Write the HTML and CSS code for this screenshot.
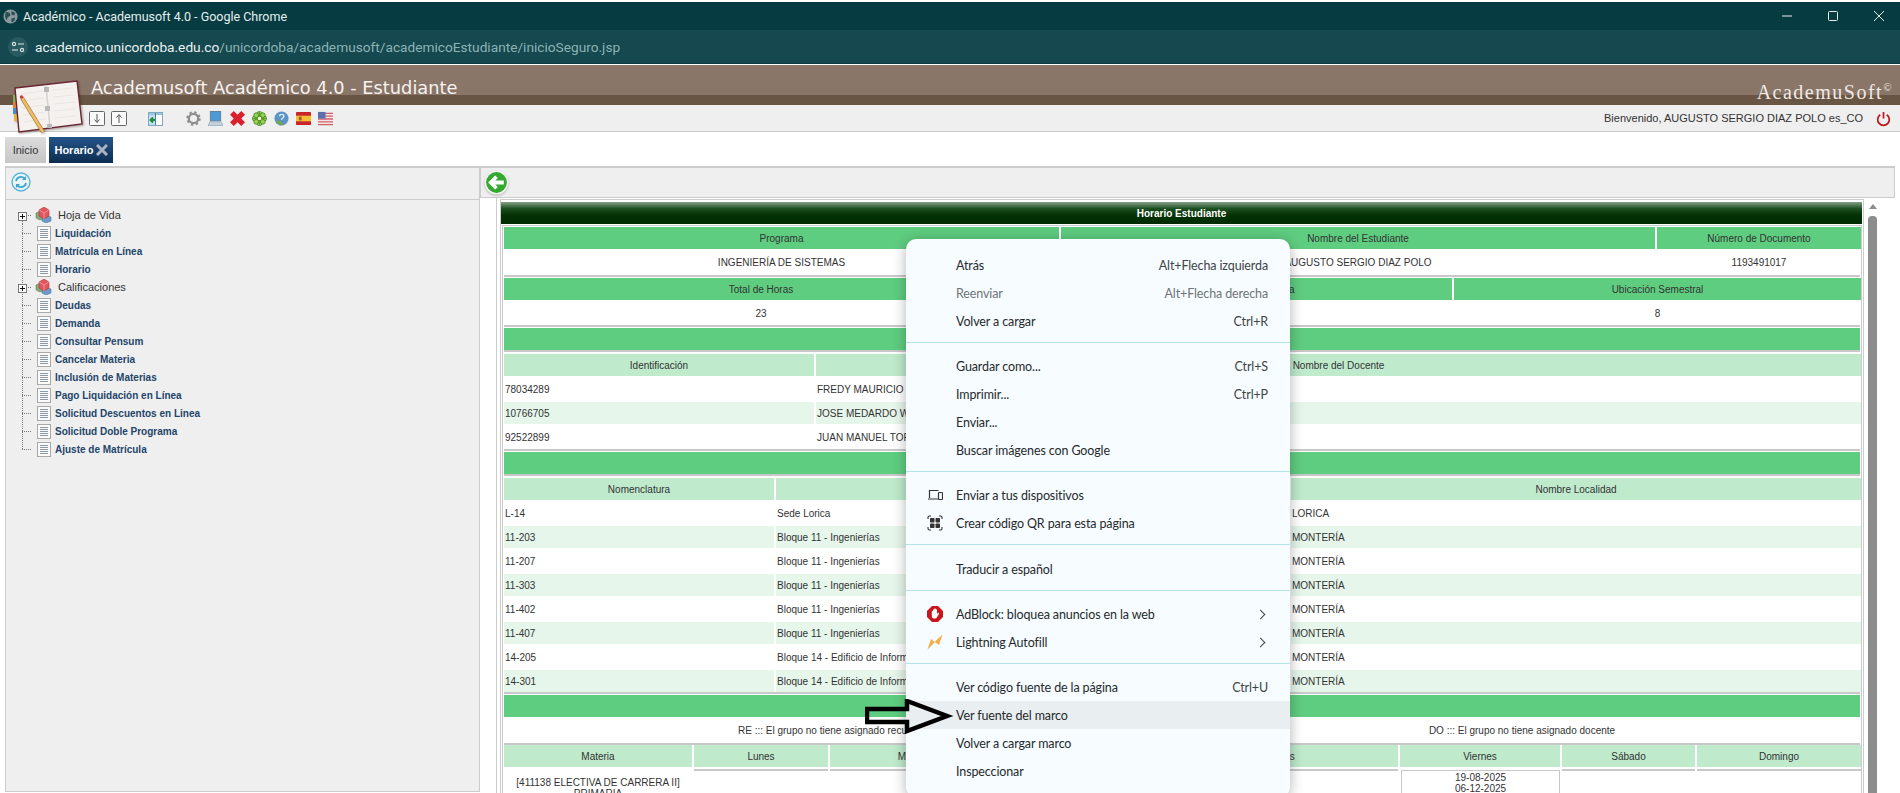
FILE: index.html
```html
<!DOCTYPE html>
<html lang="es">
<head>
    <meta charset="UTF-8">
    <title>Académico - Academusoft 4.0 - Google Chrome</title>
    <link rel="stylesheet" href="styles.css">
</head>
<body>
    <svg class="defs" width="0" height="0">
        <symbol id="doc" viewBox="0 0 14 15">
            <rect x=".5" y=".5" width="13" height="14" fill="#fafafa" stroke="#a9a9a9"/>
            <path d="M3 3.5h8M3 5.5h8M3 7.5h8M3 9.5h8M3 11.5h8" stroke="#8b98a5"/>
        </symbol>
        <symbol id="cubes" viewBox="0 0 17 16">
            <path d="M1 6l4-2 4 2v5l-4 2-4-2z" fill="#7fae7a" stroke="#5c8a58" stroke-width=".6"/>
            <path d="M7 10l4-2 5 2v4l-5 2-4-2z" fill="#6d9ac9" stroke="#4c78a6" stroke-width=".6"/>
            <path d="M4 3l5-3 5 3v6l-5 3-5-3z" fill="#e0565c" stroke="#b23a40" stroke-width=".6"/>
            <path d="M4 3l5 3 5-3M9 6v6" fill="none" stroke="#f2a9ab" stroke-width=".7"/>
        </symbol>
        <symbol id="plus" viewBox="0 0 9 9">
            <rect x=".5" y=".5" width="8" height="8" fill="#fff" stroke="#777"/>
            <path d="M2 4.5h5M4.5 2v5" stroke="#111"/>
        </symbol>
    </svg>

    <div class="win-title">
        <svg class="globe" viewBox="0 0 16 16">
            <circle cx="8" cy="8" r="7.5" fill="#8b9a9d"/>
            <path d="M3 3l4 1 1 3-3 2-1 3-2-4zM9 2l4 2-1 3-3-1zM9 10l4-1-1 4-3 1z" fill="#2c4f55"/>
        </svg>
        <span>Académico - Academusoft 4.0 - Google Chrome</span>
        <div class="win-btns">
            <svg viewBox="0 0 12 12"><path d="M1 6h10" stroke="#e8eeee"/></svg>
            <svg viewBox="0 0 12 12"><rect x="1.5" y="1.5" width="9" height="9" rx="1" fill="none" stroke="#e8eeee"/></svg>
            <svg viewBox="0 0 12 12"><path d="M1 1l10 10M11 1L1 11" stroke="#e8eeee"/></svg>
        </div>
    </div>
    <div class="win-addr">
        <span class="tune">
            <svg viewBox="0 0 14 12">
                <circle cx="3" cy="3" r="1.6" fill="none" stroke="#dfeaeb" stroke-width="1.1"/>
                <path d="M7 3h6M1 9h6" stroke="#dfeaeb" stroke-width="1.1"/>
                <circle cx="11" cy="9" r="1.6" fill="none" stroke="#dfeaeb" stroke-width="1.1"/>
            </svg>
        </span>
        <span class="host">academico.unicordoba.edu.co</span><span class="path">/unicordoba/academusoft/academicoEstudiante/inicioSeguro.jsp</span>
    </div>

    <header class="app-head">
        <h1>Academusoft Académico 4.0 - Estudiante</h1>
        <div class="brand">AcademuSoft<sup>©</sup></div>
    </header>
    <svg class="logo" viewBox="0 0 70 55">
        <rect x="0" y="16" width="4" height="7" fill="#7cb257"/>
        <rect x="0" y="23" width="4" height="6" fill="#e0813a"/>
        <rect x="0" y="29" width="4" height="6" fill="#4c8cc8"/>
        <rect x="1" y="35" width="4" height="7" fill="#e2b53f"/>
        <path d="M2 9L64 2l5 43-63 8z" fill="#f4f1ee" stroke="#6a2733" stroke-width="1.4"/>
        <path d="M33 6l4 43" stroke="#d5d2cf" stroke-width="1.5"/>
        <path d="M8 15l22-3M9 22l22-3M9 29l22-3M10 36l22-3M11 43l22-3M39 11l21-2M40 18l21-2M41 25l21-2M41 32l21-2M42 39l21-2" stroke="#e3e0de" stroke-width=".7"/>
        <path d="M31 8h5v5h-5zM32 27h5v5h-5zM34 45h5v4h-5z" fill="#b9b9b9"/>
        <path d="M9 19l21 34" stroke="#a9772f" stroke-width="4"/>
        <path d="M9 19l21 34" stroke="#eebd6a" stroke-width="2.6"/>
        <circle cx="8.5" cy="18" r="1.8" fill="#c8404a"/>
    </svg>

    <div class="toolbar">
        <svg class="tb-box" viewBox="0 0 16 15">
            <rect x=".5" y=".5" width="15" height="14" rx="1" fill="#fafafa" stroke="#666"/>
            <path d="M8 3v8M5.500 8.500L8 11.500l2.500-3" fill="none" stroke="#555"/>
        </svg>
        <svg class="tb-box" viewBox="0 0 16 15">
            <rect x=".5" y=".5" width="15" height="14" rx="1" fill="#fafafa" stroke="#666"/>
            <path d="M8 12V4M5.500 6.500L8 3.500l2.500 3" fill="none" stroke="#555"/>
        </svg>
        <svg class="tb-panel" viewBox="0 0 15 14">
            <rect x=".5" y=".5" width="14" height="13" fill="#fff" stroke="#7fa8c4"/>
            <rect x="1" y="1" width="6" height="12" fill="#bfe0ee"/>
            <rect x="1" y="1" width="13" height="2" fill="#9cc4dc"/>
            <path d="M7.500 8H3M5 5.500L2.500 8 5 10.500" fill="none" stroke="#1e8a3a" stroke-width="1.800"/>
            <path d="M7.500 1v12" stroke="#4a7f9c"/>
        </svg>
        <div class="tb-set">
            <svg viewBox="0 0 16 16">
                <circle cx="8" cy="8" r="5" fill="none" stroke="#8d8d8d" stroke-width="2.400"/>
                <circle cx="8" cy="8" r="6.700" fill="none" stroke="#8d8d8d" stroke-width="2" stroke-dasharray="2.500 2.760"/>
            </svg>
            <svg viewBox="0 0 16 16">
                <rect x="2.500" y=".5" width="11" height="10" fill="#4d9ad6" stroke="#5f7f99"/>
                <path d="M2 11.500h12l2 4H0z" fill="#c5d3de" stroke="#7d94a8" stroke-width=".6"/>
            </svg>
            <svg viewBox="0 0 16 16"><path d="M0 4l4-4 4 4 4-4 4 4-4 4 4 4-4 4-4-4-4 4-4-4 4-4z" fill="#d9202c"/></svg>
            <svg viewBox="0 0 16 16">
                <g fill="#9ad04f" stroke="#3f7f24" stroke-width=".8">
                    <circle cx="8" cy="3.400" r="3"/><circle cx="3.400" cy="8" r="3"/>
                    <circle cx="12.600" cy="8" r="3"/><circle cx="8" cy="12.600" r="3"/>
                    <circle cx="4.500" cy="4.500" r="2.600"/><circle cx="11.500" cy="4.500" r="2.600"/>
                    <circle cx="4.500" cy="11.500" r="2.600"/><circle cx="11.500" cy="11.500" r="2.600"/>
                </g>
                <path d="M8 1v14M1 8h14" stroke="#3f7f24" stroke-width=".7"/>
                <circle cx="8" cy="8" r="1.800" fill="#eef4c4"/>
            </svg>
            <svg viewBox="0 0 16 16">
                <circle cx="8" cy="8" r="7.500" fill="#5c94c8"/>
                <path d="M2 11c3-2 6 0 8 4l-4 .5z" fill="#76a845"/>
                <path d="M6 5.500c0-2.500 4.500-2.500 4.500 0 0 2-2.500 2-2.500 4" fill="none" stroke="#dfeaf5" stroke-width="1.500"/>
            </svg>
            <svg viewBox="0 0 16 16">
                <rect y="1" width="16" height="14" rx="1" fill="#c9242b"/>
                <rect y="5" width="16" height="6" fill="#f3c032"/>
                <rect x="3" y="6" width="3" height="4" fill="#b0552c"/>
            </svg>
            <svg viewBox="0 0 16 16">
                <rect y="1" width="16" height="14" rx="1" fill="#f4e6e6"/>
                <path d="M0 2.500h16M0 5.500h16M0 8.500h16M0 11.500h16M0 14.500h16" stroke="#d1626a" stroke-width="1.400"/>
                <rect y="1" width="8" height="7" fill="#5a6fae"/>
            </svg>
        </div>
        <div class="welcome">Bienvenido, AUGUSTO SERGIO DIAZ POLO es_CO</div>
        <svg class="power" viewBox="0 0 16 16">
            <path d="M4.500 3.500a6.200 6.200 0 1 0 7 0" fill="none" stroke="#c3161c" stroke-width="1.800"/>
            <path d="M8 .5v7" stroke="#c3161c" stroke-width="1.800"/>
        </svg>
    </div>

    <nav class="tabs">
        <span class="tab">Inicio</span>
        <span class="tab active">Horario <svg viewBox="0 0 12 12"><path d="M1 1l10 10M11 1L1 11" stroke="#a9b4c0" stroke-width="3"/></svg></span>
    </nav>

    <main class="main">
        <aside class="side">
            <div class="side-bar">
                <svg class="refresh" viewBox="0 0 20 20">
                    <circle cx="10" cy="10" r="9" fill="#e8f4fa" stroke="#5ab4d8" stroke-width="1.400"/>
                    <path d="M5 9a5 5 0 0 1 9-2M15 11a5 5 0 0 1-9 2" fill="none" stroke="#3fa4d0" stroke-width="1.800"/>
                    <path d="M15 4v4h-4zM5 16v-4h4z" fill="#3fa4d0"/>
                </svg>
            </div>
            <ul class="tree">
                <li class="folder"><span class="branch first"><svg class="plus"><use href="#plus"/></svg></span><svg class="cube"><use href="#cubes"/></svg>Hoja de Vida</li>
                <li><span class="branch"></span><svg class="doc"><use href="#doc"/></svg>Liquidación</li>
                <li><span class="branch"></span><svg class="doc"><use href="#doc"/></svg>Matrícula en Línea</li>
                <li><span class="branch"></span><svg class="doc"><use href="#doc"/></svg>Horario</li>
                <li class="folder"><span class="branch"><svg class="plus"><use href="#plus"/></svg></span><svg class="cube"><use href="#cubes"/></svg>Calificaciones</li>
                <li><span class="branch"></span><svg class="doc"><use href="#doc"/></svg>Deudas</li>
                <li><span class="branch"></span><svg class="doc"><use href="#doc"/></svg>Demanda</li>
                <li><span class="branch"></span><svg class="doc"><use href="#doc"/></svg>Consultar Pensum</li>
                <li><span class="branch"></span><svg class="doc"><use href="#doc"/></svg>Cancelar Materia</li>
                <li><span class="branch"></span><svg class="doc"><use href="#doc"/></svg>Inclusión de Materias</li>
                <li><span class="branch"></span><svg class="doc"><use href="#doc"/></svg>Pago Liquidación en Línea</li>
                <li><span class="branch"></span><svg class="doc"><use href="#doc"/></svg>Solicitud Descuentos en Linea</li>
                <li><span class="branch"></span><svg class="doc"><use href="#doc"/></svg>Solicitud Doble Programa</li>
                <li><span class="branch last"></span><svg class="doc"><use href="#doc"/></svg>Ajuste de Matrícula</li>
            </ul>
        </aside>

        <section class="content">
            <div class="content-bar">
                <svg class="back" viewBox="0 0 24 24">
                    <circle cx="12" cy="12" r="11.500" fill="#f4f4f4"/>
                    <circle cx="12" cy="12" r="10" fill="#34a92f"/>
                    <path d="M19 12H8M12 6.500L6.500 12l5.500 5.500" fill="none" stroke="#fff" stroke-width="3.600"/>
                </svg>
            </div>
            <div class="content-body">
                <div class="frame-outer">
                    <div class="frame">
                        <div class="title">Horario Estudiante</div>
                        <div class="box">
                            <div class="row head c-prog"><div>Programa</div><div>Nombre del Estudiante</div><div>Número de Documento</div></div>
                            <div class="row c-prog"><div>INGENIERÍA DE SISTEMAS</div><div>AUGUSTO SERGIO DIAZ POLO</div><div>1193491017</div></div>
                            <div class="rule"></div>
                            <div class="row head c-tot"><div>Total de Horas</div><div>Promedio de la Asignatura</div><div>Ubicación Semestral</div></div>
                            <div class="row short c-tot"><div>23</div><div></div><div>8</div></div>
                            <div class="rule"></div>
                            <div class="row head"><div>Docentes</div></div>
                            <div class="rule tight"></div>
                            <div class="row sub c-doc"><div>Identificación</div><div>Nombre del Docente</div></div>
                            <div class="row left c-doc"><div>78034289</div><div>FREDY MAURICIO</div></div>
                            <div class="row left band c-doc"><div>10766705</div><div>JOSE MEDARDO W</div></div>
                            <div class="row left short c-doc"><div>92522899</div><div>JUAN MANUEL TOR</div></div>
                            <div class="rule"></div>
                            <div class="row head"><div>Aulas</div></div>
                            <div class="rule tight"></div>
                            <div class="row sub c-aula"><div>Nomenclatura</div><div>Nombre Sede</div><div>Nombre Localidad</div></div>
                            <div class="row left c-aula"><div>L-14</div><div>Sede Lorica</div><div>LORICA</div></div>
                            <div class="row left band c-aula"><div>11-203</div><div>Bloque 11 - Ingenierías</div><div>MONTERÍA</div></div>
                            <div class="row left c-aula"><div>11-207</div><div>Bloque 11 - Ingenierías</div><div>MONTERÍA</div></div>
                            <div class="row left band c-aula"><div>11-303</div><div>Bloque 11 - Ingenierías</div><div>MONTERÍA</div></div>
                            <div class="row left c-aula"><div>11-402</div><div>Bloque 11 - Ingenierías</div><div>MONTERÍA</div></div>
                            <div class="row left band c-aula"><div>11-407</div><div>Bloque 11 - Ingenierías</div><div>MONTERÍA</div></div>
                            <div class="row left c-aula"><div>14-205</div><div>Bloque 14 - Edificio de Informática</div><div>MONTERÍA</div></div>
                            <div class="row left band c-aula"><div>14-301</div><div>Bloque 14 - Edificio de Informática</div><div>MONTERÍA</div></div>
                            <div class="rule"></div>
                            <div class="row head"><div>Horario</div></div>
                            <div class="row c-notas"><div>RE ::: El grupo no tiene asignado recurso físico</div><div>DO ::: El grupo no tiene asignado docente</div></div>
                            <div class="rule flush"></div>
                            <div class="row sub c-hor"><div>Materia</div><div>Lunes</div><div>Martes</div><div>Miércoles</div><div>Jueves</div><div>Viernes</div><div>Sábado</div><div>Domingo</div></div>
                            <div class="hor-body c-hor">
                                <div class="materia">[411138 ELECTIVA DE CARRERA II]<br>PRIMARIA</div>
                                <div class="slot"></div>
                                <div class="slot"></div>
                                <div class="slot"></div>
                                <div class="slot"></div>
                                <div class="slot filled">19-08-2025<br>06-12-2025</div>
                                <div class="slot"></div>
                                <div class="slot"></div>
                            </div>
                        </div>
                    </div>
                </div>
                <div class="scrollbar"><span class="arrow"></span><span class="thumb"></span></div>
            </div>
        </section>
    </main>

    <!-- Chrome context menu -->
    <div class="menu">
        <div class="item"><span>Atrás</span><kbd>Alt+Flecha izquierda</kbd></div>
        <div class="item off"><span>Reenviar</span><kbd>Alt+Flecha derecha</kbd></div>
        <div class="item"><span>Volver a cargar</span><kbd>Ctrl+R</kbd></div>
        <hr>
        <div class="item"><span>Guardar como...</span><kbd>Ctrl+S</kbd></div>
        <div class="item"><span>Imprimir...</span><kbd>Ctrl+P</kbd></div>
        <div class="item"><span>Enviar...</span></div>
        <div class="item"><span>Buscar imágenes con Google</span></div>
        <hr>
        <div class="item">
            <svg class="m-icon" viewBox="0 0 16 14">
                <path d="M1 11h10M2.500 10V2.500h9" fill="none" stroke="#333" stroke-width="1.200"/>
                <rect x="11.500" y="4.500" width="4" height="7" rx=".8" fill="none" stroke="#333" stroke-width="1.200"/>
            </svg>
            <span>Enviar a tus dispositivos</span>
        </div>
        <div class="item">
            <svg class="m-icon" viewBox="0 0 16 16">
                <path d="M1 4V2.500A1.500 1.500 0 0 1 2.500 1H4M12 1h1.500A1.500 1.500 0 0 1 15 2.500V4M15 12v1.500a1.500 1.500 0 0 1-1.500 1.500H12M4 15H2.500A1.500 1.500 0 0 1 1 13.500V12" fill="none" stroke="#333" stroke-width="1.100"/>
                <rect x="3" y="3" width="4.500" height="4.500" rx=".8" fill="#333"/>
                <rect x="8.500" y="3" width="4.500" height="4.500" rx=".8" fill="#333"/>
                <rect x="3" y="8.500" width="4.500" height="4.500" rx=".8" fill="#333"/>
                <rect x="8.500" y="8.500" width="4.500" height="4.500" rx=".8" fill="#333"/>
            </svg>
            <span>Crear código QR para esta página</span>
        </div>
        <hr class="wide">
        <div class="item"><span>Traducir a español</span></div>
        <hr>
        <div class="item">
            <svg class="m-icon" viewBox="0 0 16 16">
                <path d="M5 0h6l5 5v6l-5 5H5l-5-5V5z" fill="#c9161d"/>
                <path d="M4.800 8V5.500c0-.9 1.300-.9 1.300 0V3.800c0-.9 1.300-.9 1.300 0v-.8c0-.9 1.300-.9 1.300 0v.8c0-.9 1.300-.9 1.300 0V8l.8-.9c.7-.6 1.500 0 1.100.8l-1.900 3.300c-.5.900-1.100 1.300-2.100 1.300H7c-1.400 0-2.200-.9-2.200-2.200z" fill="#fff"/>
            </svg>
            <span>AdBlock: bloquea anuncios en la web</span><i class="chev"></i>
        </div>
        <div class="item">
            <svg class="m-icon" viewBox="0 0 16 16"><path d="M.5 15.500L4 5l3.500 3L15.500 .5 12 11 8 8z" fill="#f5ad45"/></svg>
            <span>Lightning Autofill</span><i class="chev"></i>
        </div>
        <hr>
        <div class="item"><span>Ver código fuente de la página</span><kbd>Ctrl+U</kbd></div>
        <div class="item hover"><span>Ver fuente del marco</span></div>
        <div class="item"><span>Volver a cargar marco</span></div>
        <div class="item"><span>Inspeccionar</span></div>
    </div>

    <svg class="pointer" viewBox="0 0 90 36">
        <path d="M2 10h40V2l40 15-40 15v-9H2z" fill="none" stroke="#000" stroke-width="4.500"/>
    </svg>
</body>
</html>
```

FILE: styles.css
```css
/* Page */
* {
    box-sizing: border-box;
}

html, body {
    height: 793px;
    overflow: hidden;
}

body {
    margin: 0;
    background: #fff;
    color: #333;
    font-family: "Liberation Sans", Arial, sans-serif;
    font-size: 10px;
    position: relative;
}

.defs {
    position: absolute;
}

/* Chrome window */
.win-title {
    margin-top: 2px;
    height: 28px;
    background: #073b42;
    color: #e6eeee;
    font-family: Roboto, sans-serif;
    font-size: 12.5px;
    display: flex;
    align-items: center;
    padding-left: 3px;
}

.globe {
    width: 15px;
    height: 15px;
    margin-right: 5px;
}

.win-btns {
    margin-left: auto;
    display: flex;
    gap: 34px;
    padding-right: 15px;
}

.win-btns svg {
    width: 12px;
    height: 12px;
}

.win-addr {
    height: 34px;
    background: #15484f;
    border-bottom: 1px solid #0c3a40;
    font-family: Roboto, sans-serif;
    font-size: 13.7px;
    display: flex;
    align-items: center;
    padding-left: 8px;
}

.tune {
    width: 20px;
    height: 20px;
    border-radius: 50%;
    background: #2a5a61;
    margin-right: 7px;
    display: flex;
    align-items: center;
    justify-content: center;
}

.tune svg {
    width: 14px;
    height: 12px;
}

.host {
    color: #eaf2f2;
}

.path {
    color: #8db2b6;
}

/* Application header */
.app-head {
    margin-top: 1px;
    height: 40px;
    background: linear-gradient(#8a7668 30px, #695544 30px);
    display: flex;
    justify-content: space-between;
    color: #f6f3f0;
}

.app-head h1 {
    margin: 0;
    padding: 12px 0 0 91px;
    font-family: "DejaVu Sans", sans-serif;
    font-size: 17.8px;
    font-weight: normal;
    line-height: 21px;
}

.brand {
    font-family: "Liberation Serif", serif;
    font-size: 20px;
    letter-spacing: 1.5px;
    color: #efeae6;
    padding: 16px 7px 0 0;
    line-height: 22px;
}

.brand sup {
    font-size: 11px;
    line-height: 0;
}

.logo {
    position: absolute;
    left: 13px;
    top: 79px;
    width: 70px;
    height: 55px;
    filter: drop-shadow(1px 1px 1px rgba(60, 40, 30, .45));
}

.toolbar {
    height: 27px;
    background: #efefef;
    border-bottom: 1px solid #ccc;
    display: flex;
    align-items: center;
    padding: 0 9px 0 89px;
}

.tb-box {
    width: 16px;
    height: 15px;
    margin: 1px 6px 0 0;
}

.tb-panel {
    width: 15px;
    height: 14px;
    margin: 1px 0 0 15px;
}

.tb-set {
    display: flex;
    gap: 7px;
    margin: 1px 0 0 23px;
}

.tb-set svg {
    width: 15px;
    height: 15px;
}

.welcome {
    margin-left: auto;
    font-size: 11px;
    color: #333;
    margin-right: 13px;
}

.power {
    width: 15px;
    height: 16px;
    margin-top: 1px;
}

/* Tabs */
.tabs {
    height: 34px;
    display: flex;
    gap: 3px;
    padding: 5px 0 3px 5px;
}

.tab {
    width: 41px;
    background: linear-gradient(#dcdcdc, #c6c6c6);
    color: #333;
    display: flex;
    align-items: center;
    justify-content: center;
    font-size: 11px;
}

.tab.active {
    width: 64px;
    background: linear-gradient(#24558a, #0c2c50);
    color: #fff;
    font-weight: bold;
    gap: 2px;
}

.tab svg {
    width: 12px;
    height: 12px;
}

/* Main panels */
.main {
    display: flex;
    padding-left: 5px;
    height: 626px;
}

.side {
    width: 475px;
    background: #efefef;
    border: 1px solid #ccc;
    border-top-width: 2px;
}

.side-bar {
    height: 32px;
    border-bottom: 1px solid #ccc;
    padding: 4px 0 0 5px;
}

.refresh {
    width: 20px;
    height: 20px;
}

.tree {
    list-style: none;
    margin: 0;
    padding: 6px 0 0 16px;
    color: #23456a;
    font-weight: bold;
}

.tree li {
    height: 18px;
    display: flex;
    align-items: center;
}

.tree .folder {
    font-weight: normal;
    font-size: 11px;
    color: #333;
}

.branch {
    width: 15px;
    height: 18px;
    position: relative;
    background:
        repeating-linear-gradient(to bottom, #777 0 1px, transparent 1px 2px) left top / 1px 100% no-repeat,
        repeating-linear-gradient(to right, #777 0 1px, transparent 1px 2px) left 9px / 9px 1px no-repeat;
}

.branch.first {
    background:
        repeating-linear-gradient(to bottom, #777 0 1px, transparent 1px 2px) left bottom / 1px 3px no-repeat,
        repeating-linear-gradient(to right, #777 0 1px, transparent 1px 2px) left 9px / 9px 1px no-repeat;
}

.branch.last {
    background:
        repeating-linear-gradient(to bottom, #777 0 1px, transparent 1px 2px) left top / 1px 10px no-repeat,
        repeating-linear-gradient(to right, #777 0 1px, transparent 1px 2px) left 9px / 9px 1px no-repeat;
}

.plus {
    position: absolute;
    left: -4px;
    top: 6px;
    width: 9px;
    height: 9px;
}

.doc {
    width: 14px;
    height: 15px;
    margin-right: 4px;
}

.cube {
    width: 17px;
    height: 16px;
    margin: 0 6px 0 -2px;
}

.content {
    width: 1415px;
}

.content-bar {
    height: 32px;
    background: #efefef;
    border: 1px solid #ccc;
    border-top-width: 2px;
    padding: 2px 0 0 3px;
}

.back {
    width: 25px;
    height: 25px;
    filter: drop-shadow(0 1px 1px rgba(0, 0, 0, .25));
}

.content-body {
    display: flex;
    padding-left: 16px;
}

.frame-outer {
    border-left: 1px solid #ccc;
    padding: 1px 0 0 3px;
    height: 600px;
}

.frame {
    width: 1364px;
    height: 600px;
    border: 1px solid #ccc;
    border-bottom: 0;
    padding: 2px 1px 0 0;
}

.title {
    height: 22px;
    background: linear-gradient(#86a088, #1d4f20 30%, #033104 60%, #012c02);
    color: #fff;
    font-weight: bold;
    text-align: center;
    line-height: 24px;
}

.box {
    margin: 1px 0 0 1px;
    border: 1px solid #ccc;
    border-bottom: 0;
    padding: 1px 1px 0;
    width: 1360px;
}

/* Table rows */
.row {
    display: grid;
    column-gap: 2px;
    height: 26px;
}

.row > div {
    display: flex;
    align-items: center;
    justify-content: center;
    white-space: nowrap;
    overflow: hidden;
    padding-top: 1px;
}

.row.short {
    height: 25px;
}

.row.head {
    height: 22px;
}

.row.head > div {
    background: #5fcd80;
}

.row.sub {
    height: 22px;
}

.row.sub > div {
    background: #bfeacc;
}

.row.band {
    height: 22px;
}

.row.band > div {
    background: #e6f6eb;
}

.row.left > div {
    justify-content: flex-start;
    padding-left: 1px;
}

.rule {
    height: 2px;
    background: #c8c8c8;
    margin-bottom: 1px;
}

.rule.tight {
    margin-bottom: 2px;
}

.rule.flush {
    margin-bottom: 0;
}

.c-prog {
    grid-template-columns: 555px 594px 204px;
}

.c-tot {
    grid-template-columns: 514px 432px 407px;
}

.c-doc {
    grid-template-columns: 310px 1045px;
}

.c-aula {
    grid-template-columns: 270px 513px 570px;
}

.c-notas {
    grid-template-columns: 677px 678px;
}

.c-hor {
    grid-template-columns: 188px 134px 166px 160px 238px 160px 133px 164px;
}

.hor-body {
    display: grid;
    column-gap: 2px;
    margin-top: 2px;
    text-align: center;
    line-height: 11px;
}

.materia {
    padding-top: 8px;
}

.slot {
    border-top: 2px solid #c8c8c8;
    height: 24px;
}

.slot.filled {
    border: 1px solid #c8c8c8;
    margin: 1px 0 0 1px;
    padding-top: 1px;
    height: 30px;
}

.scrollbar {
    width: 9px;
    margin-left: 4px;
    display: flex;
    flex-direction: column;
    align-items: center;
    padding-top: 6px;
}

.arrow {
    border: 4px solid transparent;
    border-top: 0;
    border-bottom: 5px solid #8c8c8c;
}

.thumb {
    width: 9px;
    height: 580px;
    margin-top: 7px;
    background: #8c8c8c;
    border-radius: 4px 4px 0 0;
}

/* Context menu */
.menu {
    position: absolute;
    left: 906px;
    top: 239px;
    width: 384px;
    height: 558px;
    padding-top: 12px;
    background: #f6fcff;
    border-radius: 10px;
    box-shadow: 0 2px 14px rgba(0, 0, 0, .3);
    font-family: Lato, sans-serif;
    font-size: 12.5px;
    letter-spacing: -.12px;
    color: #262a2c;
}

.item {
    height: 28px;
    display: flex;
    align-items: center;
    padding: 0 22px 0 50px;
    position: relative;
}

.item.off {
    color: #6e7476;
}

.item.hover {
    background: #e9eef0;
}

.item kbd {
    margin-left: auto;
    font: inherit;
    color: #3f4446;
}

.item.off kbd {
    color: #6e7476;
}

.m-icon {
    position: absolute;
    left: 21px;
    top: 6px;
    width: 16px;
    height: 16px;
}

.chev {
    width: 7px;
    height: 7px;
    margin-left: auto;
    margin-right: 4px;
    border-top: 1px solid #444;
    border-right: 1px solid #444;
    transform: rotate(45deg);
}

.menu hr {
    margin: 7px 0 9px;
    height: 1px;
    border: 0;
    background: #b4e3ea;
}

.menu hr.wide {
    margin-bottom: 10px;
}

.pointer {
    position: absolute;
    left: 865px;
    top: 699px;
    width: 90px;
    height: 36px;
}
```
